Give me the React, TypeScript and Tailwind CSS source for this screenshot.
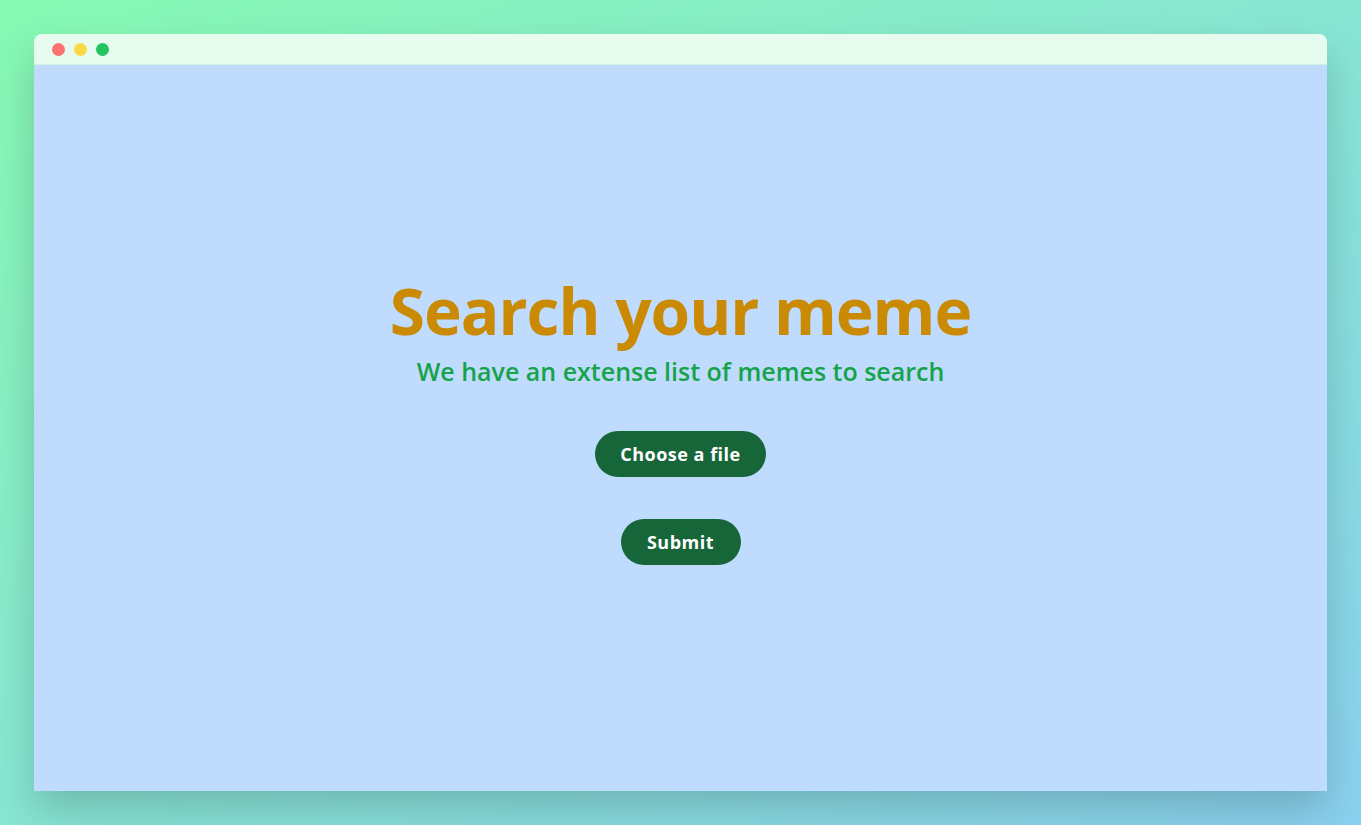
export default function App() {
  return (
    <div
      className="w-[1361px] h-[825px] bg-gradient-to-br from-[#86f9b2] to-[#8ad1f0] flex items-start"
      style={{ fontFamily: '"Open Sans", "Noto Sans", sans-serif' }}
    >
      <div className="ml-[34px] mt-[34px] w-[1293px] h-[757px] flex flex-col rounded-t-lg shadow-[0_20px_40px_rgba(0,0,0,0.18)] overflow-hidden">
        <div className="h-[31px] shrink-0 bg-[#e7fcef] border-b border-[#d6efe0] flex items-center gap-[9px] pl-[18px]">
          <span className="w-[13px] h-[13px] rounded-full bg-[#fb7272]" />
          <span className="w-[13px] h-[13px] rounded-full bg-[#fcd944]" />
          <span className="w-[13px] h-[13px] rounded-full bg-[#22c55e]" />
        </div>
        <div className="flex-1 bg-[#bfdbfe] flex flex-col items-center justify-center pb-[12px]">
          <h1 className="text-[64px] leading-[64px] font-bold text-[#ca8a04] tracking-[-1px]">Search your meme</h1>
          <p className="mt-[13px] text-[25px] leading-[30px] font-semibold text-[#16a34a]">We have an extense list of memes to search</p>
          <button className="mt-[45px] h-[46px] w-[171px] rounded-full bg-[#17663a] text-white text-[18px] font-bold tracking-[0.5px]">Choose a file</button>
          <button className="mt-[42px] h-[46px] w-[120px] rounded-full bg-[#17663a] text-white text-[18px] font-bold tracking-[0.5px]">Submit</button>
        </div>
      </div>
    </div>
  );
}
